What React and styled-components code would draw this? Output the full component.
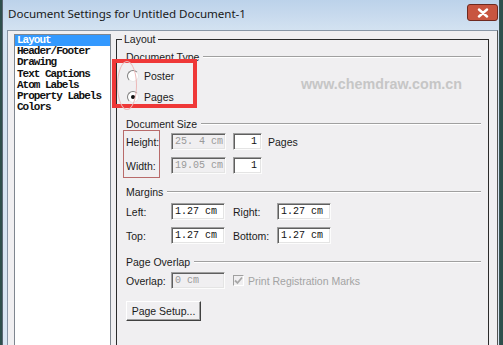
import React from 'react';
import styled, { createGlobalStyle } from 'styled-components';

const Global = createGlobalStyle`
  html, body {
    margin: 0;
    height: 100%;
    overflow: hidden;
    background: #2f4f4c;
  }
`;

const Frame = styled.div`
  position: relative;
  margin-left: 2px;
  width: 498px;
  height: 345px;
  box-sizing: border-box;
  display: flex;
  flex-direction: column;
  border-left: 1px solid #5a6673;
  border-right: 1px solid #3a5452;
  padding: 0 1px 0 4px;
  background: linear-gradient(#bcd2ea, #d3e2f1 30px, #d9e6f3);
`;

const TitleBar = styled.div`
  height: 30px;
  flex: none;
  display: flex;
  align-items: center;
  justify-content: space-between;
  padding-left: 1px;
  font-family: 'Noto Sans', 'Open Sans', sans-serif;
  font-size: 11.6px;
  color: #1a1a1a;
  letter-spacing: -0.05px;
`;

const TitleText = styled.span`
  margin-top: -4px;
`;

const CloseButton = styled.div`
  width: 31px;
  height: 17px;
  flex: none;
  margin-top: -5px;
  box-sizing: border-box;
  border: 1px solid #6e2a20;
  border-radius: 3px;
  background: #c85540;
  display: flex;
  align-items: center;
  justify-content: center;
`;

const Client = styled.div`
  flex: 1;
  display: flex;
  align-items: flex-start;
  background: #f0eff1;
  border-top: 1px solid #8896a6;
  border-left: 1px solid #8896a6;
  border-right: 1px solid #555;
  padding: 3px 0 0 6px;
  overflow: hidden;
`;

const List = styled.ul`
  list-style: none;
  margin: 0;
  padding: 0;
  width: 97px;
  height: 330px;
  flex: none;
  box-sizing: border-box;
  border: 1px solid #7f868f;
  background: #fff;
  font-family: 'Liberation Mono', 'DejaVu Sans Mono', monospace;
  font-weight: bold;
  font-size: 11px;
  letter-spacing: -1px;
`;

const Item = styled.li`
  height: 11.2px;
  line-height: 11.2px;
  padding-left: 2px;
  white-space: nowrap;
  color: ${(p) => (p.$selected ? '#fff' : '#111')};
  background: ${(p) => (p.$selected ? '#3399ff' : 'transparent')};
`;

const GroupBox = styled.div`
  position: relative;
  margin: 5px 0 0 5px;
  width: 373px;
  height: 330px;
  flex: none;
  box-sizing: border-box;
  border: 1px solid #2b2b2b;
  padding: 10px 7px 0 9px;
  display: flex;
  flex-direction: column;
  font-family: 'Liberation Sans', Arial, sans-serif;
  font-size: 10.5px;
  color: #1b1b1b;
`;

const Legend = styled.span`
  position: absolute;
  top: -8px;
  left: 5px;
  padding: 0 2px;
  background: #f0eff1;
  line-height: 14px;
`;

const Header = styled.div`
  height: 14px;
  flex: none;
  display: flex;
  align-items: center;
  gap: 4px;
  margin-top: ${(p) => p.$mt || 0}px;
`;

const Rule = styled.div`
  flex: 1;
  height: 0;
  border-top: 1px solid #a0a0a0;
  border-bottom: 1px solid #fff;
`;

const Row = styled.div`
  height: ${(p) => p.$h || 17}px;
  flex: none;
  display: flex;
  align-items: center;
  margin-top: ${(p) => p.$mt || 0}px;
`;

const Label = styled.span`
  width: ${(p) => p.$w || 45}px;
  flex: none;
  white-space: nowrap;
  color: ${(p) => (p.$dim ? '#a3a3a3' : 'inherit')};
`;

const Field = styled.div`
  width: ${(p) => p.$w || 54}px;
  height: 17px;
  flex: none;
  box-sizing: border-box;
  margin-right: ${(p) => p.$mr || 0}px;
  border: 1px solid;
  border-color: #a0a0a0 #fcfcfc #fcfcfc #a0a0a0;
  box-shadow: inset 1px 1px 0 #5f5f5f, inset -1px -1px 0 #e4e4e4;
  background: ${(p) => (p.$off ? '#f0eff1' : '#fff')};
  color: ${(p) => (p.$off ? '#9a9a9a' : '#111')};
  display: flex;
  align-items: center;
  justify-content: ${(p) => (p.$right ? 'flex-end' : 'flex-start')};
  padding: 0 4px 0 3px;
  font-family: 'Liberation Mono', 'DejaVu Sans Mono', monospace;
  font-size: 10px;
  white-space: pre;
`;

const Radio = styled.span`
  position: relative;
  width: 12px;
  height: 12px;
  flex: none;
  box-sizing: border-box;
  margin: 0 5px 0 1px;
  border-radius: 50%;
  border: 1px solid;
  border-color: #808080 #e8e8e8 #e8e8e8 #808080;
  background: #fff;
  &::after {
    content: '';
    display: ${(p) => (p.$on ? 'block' : 'none')};
    position: absolute;
    left: 3px;
    top: 3px;
    width: 4px;
    height: 4px;
    border-radius: 50%;
    background: #111;
  }
`;

const Check = styled.span`
  width: 11px;
  height: 11px;
  flex: none;
  box-sizing: border-box;
  margin-right: 4px;
  border: 1px solid;
  border-color: #a0a0a0 #fff #fff #a0a0a0;
  background: #f0eff1;
  display: flex;
  align-items: center;
  justify-content: center;
`;

const Button = styled.div`
  width: 75px;
  height: 20px;
  flex: none;
  box-sizing: border-box;
  margin-top: ${(p) => p.$mt || 0}px;
  border: 1px solid;
  border-color: #fff #404040 #404040 #fff;
  box-shadow: inset -1px -1px 0 #a0a0a0;
  background: #f0eff1;
  display: flex;
  align-items: center;
  justify-content: center;
`;

const RedBox = styled.div`
  position: absolute;
  box-sizing: border-box;
  left: ${(p) => p.$x}px;
  top: ${(p) => p.$y}px;
  width: ${(p) => p.$w}px;
  height: ${(p) => p.$h}px;
  border: ${(p) => p.$b}px solid ${(p) => p.$c};
  border-radius: ${(p) => (p.$round ? '50%' : '0')};
  pointer-events: none;
`;

const Watermark = styled.span`
  position: absolute;
  left: 184px;
  top: 36px;
  font-family: 'Liberation Sans', Arial, sans-serif;
  font-weight: bold;
  font-size: 14.3px;
  color: #c6c6c6;
  white-space: nowrap;
`;

const items = ['Layout', 'Header/Footer', 'Drawing', 'Text Captions', 'Atom Labels', 'Property Labels', 'Colors'];

export default function App() {
  return (
    <>
      <Global />
      <Frame>
        <TitleBar>
          <TitleText>Document Settings for Untitled Document-1</TitleText>
          <CloseButton>
            <svg width="12" height="10" viewBox="0 0 12 10">
              <path d="M2 1.5 L10 8.5 M10 1.5 L2 8.5" stroke="#fff" strokeWidth="2.4" strokeLinecap="round" />
            </svg>
          </CloseButton>
        </TitleBar>
        <Client>
          <List>
            {items.map((t, i) => (
              <Item key={t} $selected={i === 0}>{t}</Item>
            ))}
          </List>
          <GroupBox>
            <Legend>Layout</Legend>

            <Header>Document Type<Rule /></Header>
            <Row $h={16} $mt={4}><Radio />Poster</Row>
            <Row $h={16} $mt={5}><Radio $on />Pages</Row>

            <Header $mt={12}>Document Size<Rule /></Header>
            <Row $mt={2}>
              <Label>Height:</Label>
              <Field $off $w={55} $mr={7}>25. 4 cm</Field>
              <Field $w={29} $mr={6} $right>1</Field>
              Pages
            </Row>
            <Row $mt={7}>
              <Label>Width:</Label>
              <Field $off $w={55} $mr={7}>19.05 cm</Field>
              <Field $w={29} $right>1</Field>
            </Row>

            <Header $mt={11}>Margins<Rule /></Header>
            <Row $mt={4}>
              <Label>Left:</Label>
              <Field $mr={8}>1.27 cm</Field>
              <Label $w={44}>Right:</Label>
              <Field>1.27 cm</Field>
            </Row>
            <Row $mt={7}>
              <Label>Top:</Label>
              <Field $mr={8}>1.27 cm</Field>
              <Label $w={44}>Bottom:</Label>
              <Field>1.27 cm</Field>
            </Row>

            <Header $mt={11}>Page Overlap<Rule /></Header>
            <Row $mt={3}>
              <Label>Overlap:</Label>
              <Field $off $mr={8}>0 cm</Field>
              <Check>
                <svg width="9" height="9" viewBox="0 0 9 9">
                  <path d="M1 4.5 L3.5 7 L8 1.5" fill="none" stroke="#a8a8a8" strokeWidth="1.8" />
                </svg>
              </Check>
              <Label $dim>Print Registration Marks</Label>
            </Row>

            <Button $mt={12}>Page Setup...</Button>

            <Watermark>www.chemdraw.com.cn</Watermark>
            <RedBox $x={-5} $y={19} $w={85} $h={49} $b={4} $c="#ef3838" />
            <RedBox $x={0} $y={21} $w={20} $h={49} $b={1} $c="#ecb8b8" $round />
            <RedBox $x={6} $y={90} $w={37} $h={48} $b={1} $c="#b86a6a" />
          </GroupBox>
        </Client>
      </Frame>
    </>
  );
}
